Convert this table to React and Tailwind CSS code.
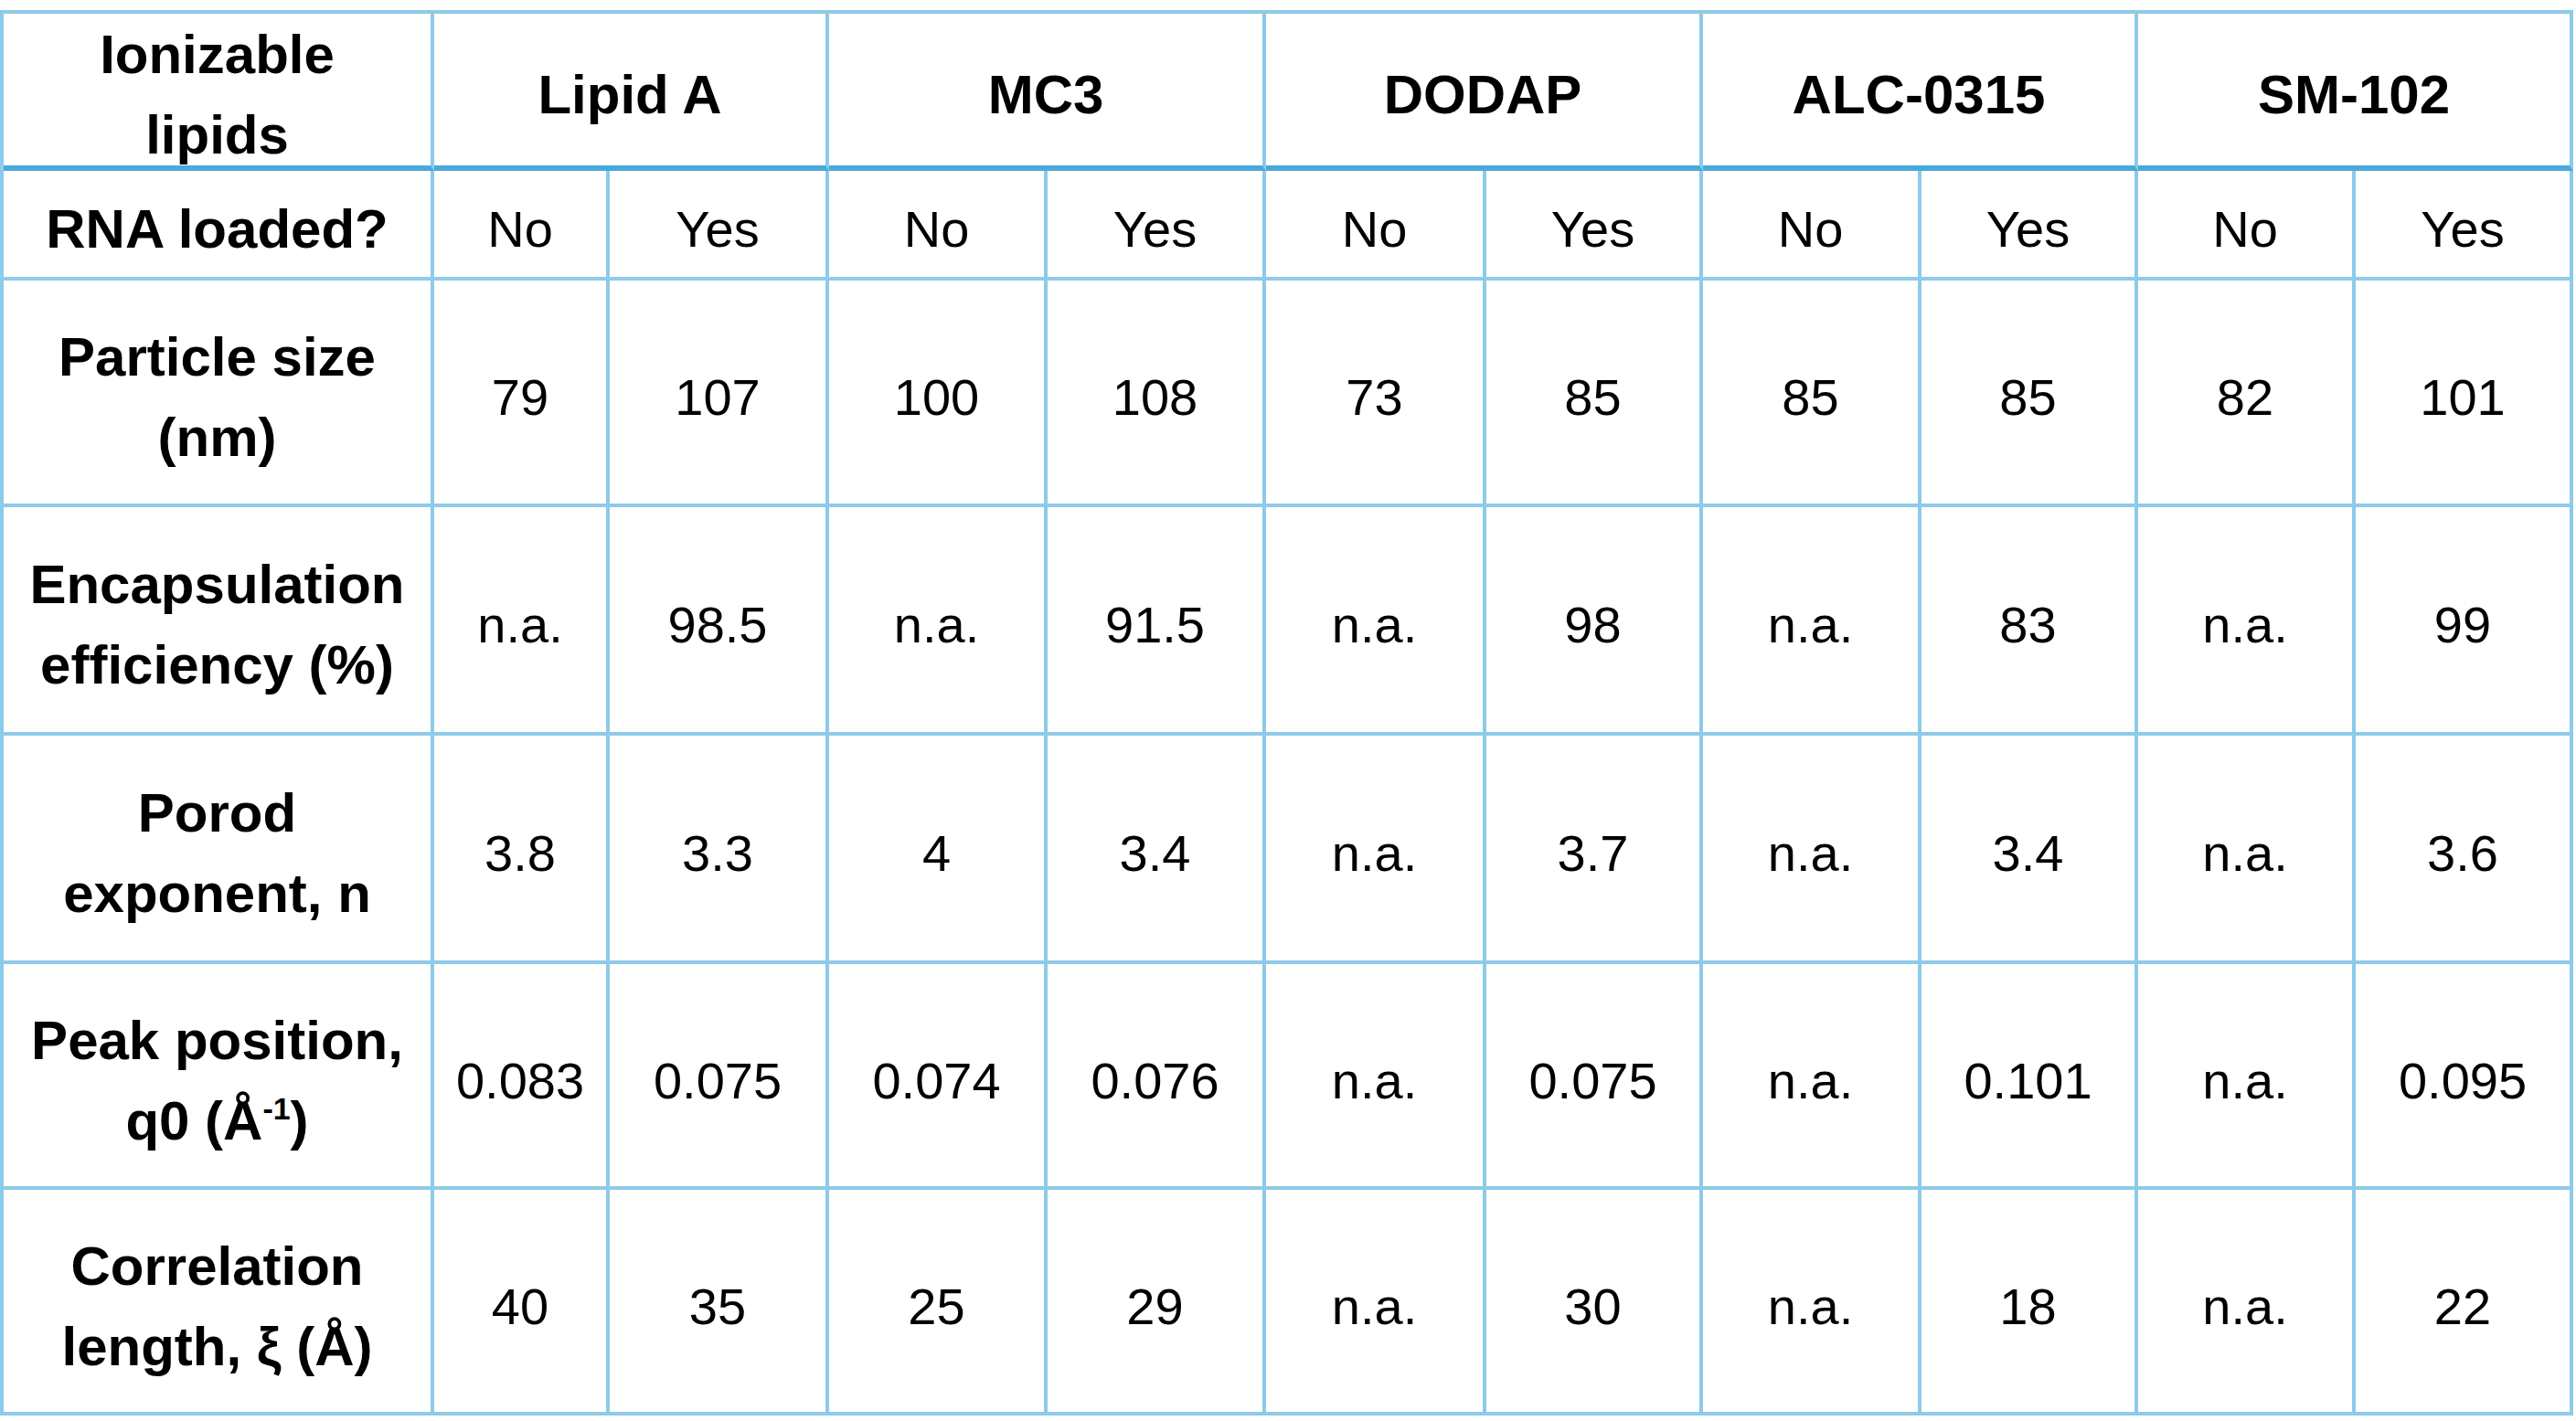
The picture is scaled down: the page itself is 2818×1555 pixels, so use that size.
import React from 'react'

const lipids = ["Lipid A", "MC3", "DODAP", "ALC-0315", "SM-102"];

const rows = [
  { label: ["Particle size", "(nm)"], values: ["79", "107", "100", "108", "73", "85", "85", "85", "82", "101"] },
  { label: ["Encapsulation", "efficiency (%)"], values: ["n.a.", "98.5", "n.a.", "91.5", "n.a.", "98", "n.a.", "83", "n.a.", "99"] },
  { label: ["Porod", "exponent, n"], values: ["3.8", "3.3", "4", "3.4", "n.a.", "3.7", "n.a.", "3.4", "n.a.", "3.6"] },
  {
    label: ["Peak position,", <>q0 (Å<sup className="text-[34px] -top-[22px]">-1</sup>)</>],
    values: ["0.083", "0.075", "0.074", "0.076", "n.a.", "0.075", "n.a.", "0.101", "n.a.", "0.095"],
  },
  { label: ["Correlation", "length, ξ (Å)"], values: ["40", "35", "25", "29", "n.a.", "30", "n.a.", "18", "n.a.", "22"] },
];

const cell = "flex items-center justify-center text-center pt-3 border-r-4 border-b-4 border-[#8ecae9] whitespace-nowrap";

const App = () => {
  return (
    <div className="w-[2818px] h-[1555px] bg-white text-black pt-[11px]" style={{ fontFamily: '"Liberation Sans", Arial, sans-serif' }}>
      <div className="grid w-fit border-l-4 border-t-4 border-[#8ecae9] grid-cols-[471px_192px_240px_239px_239px_241px_237px_239px_237px_238px_238px] grid-rows-[172px_120px_248px_250px_250px_247px_247px]">
        {/* header */}
        <div className={`${cell} border-b-[6px] border-b-[#4aa9dc] font-bold text-[60px] leading-[88px]`}>
          <div>Ionizable<br />lipids</div>
        </div>
        {lipids.map((l) => (
          <div key={l} className={`${cell} col-span-2 border-b-[6px] border-b-[#4aa9dc] font-bold text-[60px]`}>
            {l}
          </div>
        ))}

        {/* RNA loaded row */}
        <div className={`${cell} font-bold text-[60px]`}>RNA loaded?</div>
        {lipids.map((l) => (
          <React.Fragment key={l}>
            <div className={`${cell} text-[56px]`}>No</div>
            <div className={`${cell} text-[56px]`}>Yes</div>
          </React.Fragment>
        ))}

        {rows.map((r, i) => (
          <React.Fragment key={i}>
            <div className={`${cell} font-bold text-[60px] leading-[88px]`}>
              <div>{r.label[0]}<br />{r.label[1]}</div>
            </div>
            {r.values.map((v, j) => (
              <div key={j} className={`${cell} text-[56px]`}>{v}</div>
            ))}
          </React.Fragment>
        ))}
      </div>
    </div>
  );
}

export default App
